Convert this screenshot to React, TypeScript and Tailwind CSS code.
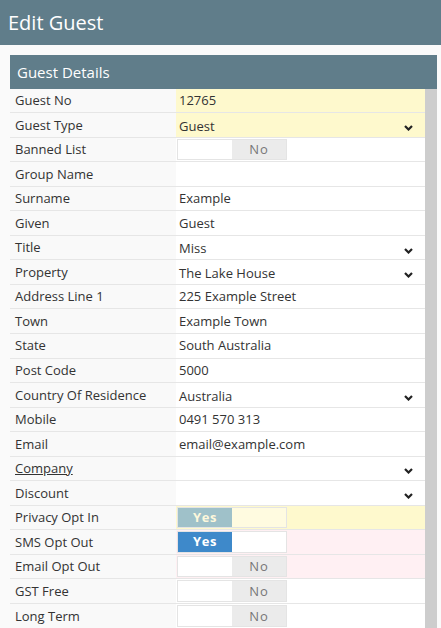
import React from 'react';

type Toggle = 'no' | 'yes' | 'yesMuted' | 'blank';

interface Row {
  label: string;
  value?: string;
  select?: boolean;
  toggle?: Toggle;
  tint?: 'yellow' | 'pink';
  link?: boolean;
}

const rows: Row[] = [
  { label: 'Guest No', value: '12765', tint: 'yellow' },
  { label: 'Guest Type', value: 'Guest', select: true, tint: 'yellow' },
  { label: 'Banned List', toggle: 'no' },
  { label: 'Group Name', value: '' },
  { label: 'Surname', value: 'Example' },
  { label: 'Given', value: 'Guest' },
  { label: 'Title', value: 'Miss', select: true },
  { label: 'Property', value: 'The Lake House', select: true },
  { label: 'Address Line 1', value: '225 Example Street' },
  { label: 'Town', value: 'Example Town' },
  { label: 'State', value: 'South Australia' },
  { label: 'Post Code', value: '5000' },
  { label: 'Country Of Residence', value: 'Australia', select: true },
  { label: 'Mobile', value: '0491 570 313' },
  { label: 'Email', value: 'email@example.com' },
  { label: 'Company', value: '', select: true, link: true },
  { label: 'Discount', value: '', select: true },
  { label: 'Privacy Opt In', toggle: 'yesMuted', tint: 'yellow' },
  { label: 'SMS Opt Out', toggle: 'yes', tint: 'pink' },
  { label: 'Email Opt Out', toggle: 'no', tint: 'pink' },
  { label: 'GST Free', toggle: 'no' },
  { label: 'Long Term', toggle: 'no' },
  { label: '', toggle: 'blank', tint: 'yellow' },
];

const Chevron = () => (
  <svg width="9" height="6" viewBox="0 0 9 6" className="shrink-0">
    <polyline points="1,1 4.5,4.5 8,1" fill="none" stroke="#222" strokeWidth="2.2" />
  </svg>
);

const ToggleSwitch: React.FC<{ state: Toggle }> = ({ state }) => {
  if (state === 'blank') {
    return <div className="h-full w-[110px] border border-[#e4e4e4] bg-[#fffbe0]" />;
  }
  if (state === 'no') {
    return (
      <div className="flex h-full w-[110px] border border-[#e4e4e4]">
        <div className="w-[54px] bg-white" />
        <div className="flex flex-1 items-center justify-center bg-[#ebebeb] pt-[1px] text-[13px] tracking-[1px] text-[#777]">
          No
        </div>
      </div>
    );
  }
  const muted = state === 'yesMuted';
  return (
    <div className="flex h-full w-[110px] border border-[#e4e4e4]">
      <div
        className={`flex w-[54px] items-center justify-center text-[13px] font-bold tracking-[0.5px] ${
          muted ? 'bg-[#9fc1c9] text-[#fdf8dc]' : 'bg-[#3e89ca] text-white'
        }`}
      >
        Yes
      </div>
      <div className={`flex-1 ${muted ? 'bg-[#fffbe0]' : 'bg-white'}`} />
    </div>
  );
};

export default function App() {
  return (
    <div className="min-h-screen bg-[#fafafa] font-['Open_Sans',sans-serif] text-[#333]">
      <div className="flex h-[45px] items-center bg-[#607d8a] px-[8px] text-[20px] text-white">
        Edit Guest
      </div>
      <div className="ml-[10px] mr-[4px] mt-[10px]">
        <div className="flex h-[33.5px] items-center bg-[#607d8a] pl-[7px] pt-[1px] text-[15px] text-white">
          Guest Details
        </div>
        <div className="flex">
          <div className="flex-1">
            {rows.map((r, i) => (
              <div key={i} className="flex h-[24.55px] border-b border-[#e6e6e6]">
                <div className="flex w-[166px] items-center bg-[#f9f9f9] pl-[5px] pt-[1px] text-[13px]">
                  <span className={r.link ? 'underline' : ''}>{r.label}</span>
                </div>
                <div
                  className={`flex flex-1 items-center text-[13px] ${
                    r.tint === 'yellow' ? 'bg-[#fef9cd]' : r.tint === 'pink' ? 'bg-[#fff0f3]' : 'bg-white'
                  } ${r.toggle ? 'py-[1px] pl-[1px]' : 'pl-[3px] pr-[12px] pt-[1px]'}`}
                >
                  {r.toggle ? (
                    <ToggleSwitch state={r.toggle} />
                  ) : (
                    <>
                      <span className={`flex-1 ${r.select ? 'pt-[2px]' : ''}`}>{r.value}</span>
                      {r.select && (
                        <span className="pt-[5px]">
                          <Chevron />
                        </span>
                      )}
                    </>
                  )}
                </div>
              </div>
            ))}
          </div>
          <div className="w-[12px] bg-[#cdcdcd]" />
        </div>
      </div>
    </div>
  );
}
